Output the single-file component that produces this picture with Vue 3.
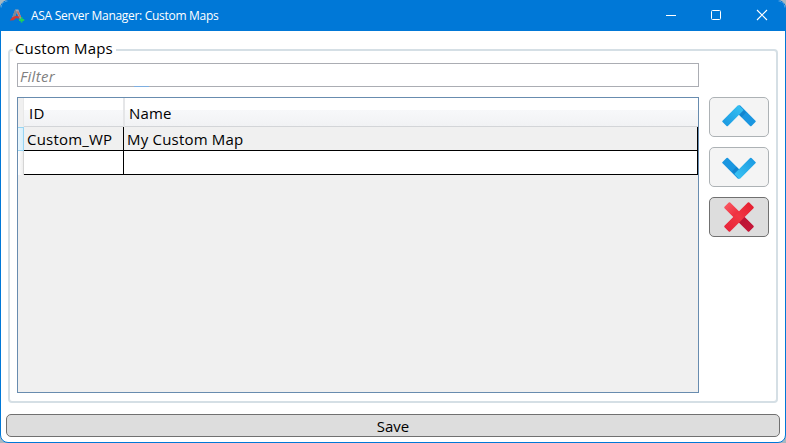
<script setup>
import { ref } from 'vue'

const filter = ref('')
const rows = ref([
  { id: 'Custom_WP', name: 'My Custom Map' },
  { id: '', name: '' },
])
</script>

<template>
  <div class="desktop">
    <div class="window">
      <header class="titlebar">
        <svg class="logo" width="16" height="16" viewBox="0 0 16 16">
          <path d="M6.2 1.5h3.2L12.8 11l-3-.8L7.8 4.6 5.4 10l-2.6.4z" fill="#a9a8b0" />
          <path d="M6.2 1.5 2.8 10.4l2.6-.6L8 4z" fill="#7c8794" />
          <path d="M.8 12.6 3 9.4l3.2-1.3 3.4.2 1.2 2.2-4-.3-2 2z" fill="#d5382f" />
          <path d="M9 2.5 12 9l-1.4.8L8 4z" fill="#c96a5c" />
          <path d="M12.6 9.2v5.4M10 12h5.2" stroke="#20cf58" stroke-width="1.8" />
        </svg>
        <span class="title">ASA Server Manager: Custom Maps</span>
        <div class="controls">
          <svg width="46" height="30" viewBox="0 0 46 30"><path d="M18 14.5h10" stroke="#fff" /></svg>
          <svg width="46" height="30" viewBox="0 0 46 30"><rect x="17.5" y="9.5" width="9" height="9" rx="1" fill="none" stroke="#fff" /></svg>
          <svg width="46" height="30" viewBox="0 0 46 30"><path d="m17 9 10 10M27 9 17 19" stroke="#fff" stroke-width="1.1" /></svg>
        </div>
      </header>

      <main class="content">
        <section class="group">
          <h1 class="legend">Custom Maps</h1>
          <div class="left">
            <label class="filter">
              <span v-if="!filter">Filter</span>
              <i class="accent"></i>
            </label>
            <div class="grid">
              <div class="row head">
                <div class="handle"></div>
                <div class="cell id">ID</div>
                <div class="cell name">Name</div>
              </div>
              <div v-for="(row, i) in rows" :key="i" class="row" :class="i === 0 ? 'current' : 'blank'">
                <div class="handle"></div>
                <div class="cell id">{{ row.id }}</div>
                <div class="cell name">{{ row.name }}</div>
              </div>
            </div>
          </div>
          <div class="actions">
            <button class="btn disabled" aria-label="Move up">
              <svg width="34" height="24" viewBox="0 0 34 24">
                <defs>
                  <linearGradient id="up"><stop stop-color="#1c9be2" /><stop offset="1" stop-color="#35bff1" /></linearGradient>
                </defs>
                <rect x="11.5" y="6.95" width="23.4" height="7.6" rx="1" fill="#1a96e0" transform="rotate(45 23.2 10.75)" />
                <path d="M19.7 12.2 16.8 9.3 21.2 4.8 24 7.6z" fill="#1285cf" />
                <rect x="-.9" y="6.95" width="23.4" height="7.6" rx="1" fill="url(#up)" transform="rotate(-45 10.8 10.75)" />
              </svg>
            </button>
            <button class="btn disabled" aria-label="Move down">
              <svg width="34" height="24" viewBox="0 0 34 24">
                <defs>
                  <linearGradient id="down"><stop stop-color="#38c1f2" /><stop offset="1" stop-color="#1c9be2" /></linearGradient>
                </defs>
                <rect x="-.9" y="9.45" width="23.4" height="7.6" rx="1" fill="#1a96e0" transform="rotate(45 10.8 13.25)" />
                <path d="M14.3 11.8 17.2 14.7 12.8 19.2 10 16.4z" fill="#1285cf" />
                <rect x="11.5" y="9.45" width="23.4" height="7.6" rx="1" fill="url(#down)" transform="rotate(-45 23.2 13.25)" />
              </svg>
            </button>
            <button class="btn" aria-label="Delete">
              <svg width="32" height="32" viewBox="0 0 32 32">
                <defs>
                  <linearGradient id="del"><stop stop-color="#f9555f" /><stop offset=".5" stop-color="#ea2537" /><stop offset=".56" stop-color="#b91335" /><stop offset="1" stop-color="#c61739" /></linearGradient>
                  <linearGradient id="del2"><stop stop-color="#e8243a" /><stop offset=".5" stop-color="#f03743" /><stop offset="1" stop-color="#e61f30" /></linearGradient>
                </defs>
                <rect x="-1.5" y="12" width="35" height="8" rx="1" fill="url(#del)" transform="rotate(45 16 16)" />
                <rect x="-1.5" y="12" width="35" height="8" rx="1" fill="url(#del2)" transform="rotate(-45 16 16)" />
              </svg>
            </button>
          </div>
        </section>
        <button class="save">Save</button>
      </main>
    </div>
  </div>
</template>

<style>
body { margin: 0; overflow: hidden; }
</style>

<style scoped>
* { box-sizing: border-box; }
.desktop {
  width: 786px;
  height: 443px;
  background: #a9b8c1;
  font-family: "Open Sans", "Noto Sans", sans-serif;
  font-size: 15px;
  color: #000;
}
.window {
  display: flex;
  flex-direction: column;
  height: 443px;
  border: 1px solid #0078d7;
  border-radius: 8px;
  background: #fff;
  overflow: hidden;
}
.titlebar {
  display: flex;
  align-items: center;
  flex: 0 0 30px;
  padding-left: 8px;
  background: #0078d7;
  color: #fff;
}
.logo { flex: none; margin-right: 6px; }
.title { flex: 1; font-size: 12px; line-height: 28px; letter-spacing: -.3px; }
.controls { display: flex; margin-right: -1px; }
.controls svg { display: block; }
.content {
  display: flex;
  flex-direction: column;
  flex: 1;
  padding: 18px 5px 4px;
}
.group {
  display: flex;
  position: relative;
  height: 354px;
  margin: 0 2px;
  padding: 12px 7px 8px;
  border: 2px solid #d5dfe5;
  border-radius: 4px;
}
.legend {
  position: absolute;
  top: -14px;
  left: 3px;
  width: 103px;
  margin: 0;
  padding-left: 2px;
  background: #fff;
  font-size: 15px;
  font-weight: 400;
  line-height: 22px;
  letter-spacing: .15px;
  white-space: nowrap;
}
.left { display: flex; flex-direction: column; width: 682px; }
.filter {
  display: flex;
  position: relative;
  height: 24px;
  padding-left: 2px;
  border: 1px solid #abadb3;
  color: #808080;
  font-style: italic;
  line-height: 25px;
  letter-spacing: .3px;
}
.accent {
  position: absolute;
  bottom: -1px;
  left: 116px;
  width: 15px;
  height: 1px;
  background: #7eaee0;
}
.grid {
  height: 296px;
  margin-top: 10px;
  border: 1px solid #688caf;
  background: #f0f0f0;
}
.row { display: flex; height: 24px; }
.handle { flex: 0 0 6px; border-right: 1px solid #d5d5d5; background: linear-gradient(90deg, #fff, #eee); }
.cell { border-right: 1px solid #000; border-bottom: 1px solid #000; line-height: 25px; letter-spacing: .2px; white-space: nowrap; }
.id { width: 100px; padding-left: 3px; }
.name { flex: 1; padding-left: 3px; }
.head { height: 29px; background: linear-gradient(#fff 0 40%, #f7f8fa 41%, #f1f2f4); }
.head .handle { background: #f0f0f0; border-right-color: #e8e8e8; border-bottom: 0; }
.head .cell { border-right: 2px solid #e5e6e8; border-bottom: 1px solid #d3d5d8; line-height: 31px; padding-left: 5px; }
.head .id { width: 101px; }
.head .name { padding-left: 4px; border-right: 0; }
.current .handle { border: 1px solid #98d5f3; border-left: 0; background: linear-gradient(90deg, #e9f6fd, #d8effa); }
.blank .cell { background: #fff; }
.actions { display: flex; flex-direction: column; gap: 10px; margin: 34px 0 0 10px; }
.btn {
  display: flex;
  align-items: center;
  justify-content: center;
  width: 60px;
  height: 40px;
  padding: 0;
  border: 1px solid #707070;
  border-radius: 5px;
  background: #ddd;
}
.btn.disabled { border-color: #adb2b5; background: #f4f4f4; }
.save {
  height: 23px;
  margin-top: 11px;
  padding: 0;
  border: 1px solid #707070;
  border-radius: 5px;
  background: #ddd;
  color: #000;
  font: 15px/22px "Open Sans", "Noto Sans", sans-serif;
}
</style>
